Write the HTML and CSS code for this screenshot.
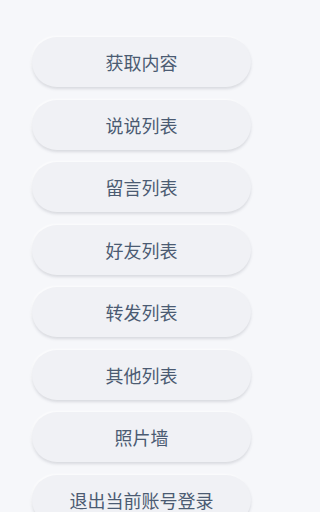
FILE: index.html
```html
<!DOCTYPE html>
<html lang="zh-CN">
<head>
<meta charset="utf-8">
<link rel="stylesheet" href="styles.css">
</head>
<body>
<div class="menu">
  <button class="btn">获取内容</button>
  <button class="btn">说说列表</button>
  <button class="btn">留言列表</button>
  <button class="btn">好友列表</button>
  <button class="btn">转发列表</button>
  <button class="btn">其他列表</button>
  <button class="btn">照片墙</button>
  <button class="btn">退出当前账号登录</button>
</div>
</body>
</html>
```
FILE: styles.css
```css
html, body {
  margin: 0;
  padding: 0;
  background: #f6f7fa;
  overflow: hidden;
}
.menu {
  display: flex;
  flex-direction: column;
  gap: 12.5px;
  padding: 37px 0 0 32px;
}
.btn {
  width: 219px;
  height: 50px;
  border: none;
  border-radius: 25px;
  background: #f0f1f5;
  box-shadow: 0 2px 3px rgba(60, 70, 90, 0.16), -1px -1px 2px rgba(255,255,255,0.8);
  font-family: "Noto Sans CJK SC", "Noto Sans", sans-serif;
  font-size: 18px;
  color: #4b5b72;
  padding: 0;
  line-height: 50px;
  flex: none;
}
```
